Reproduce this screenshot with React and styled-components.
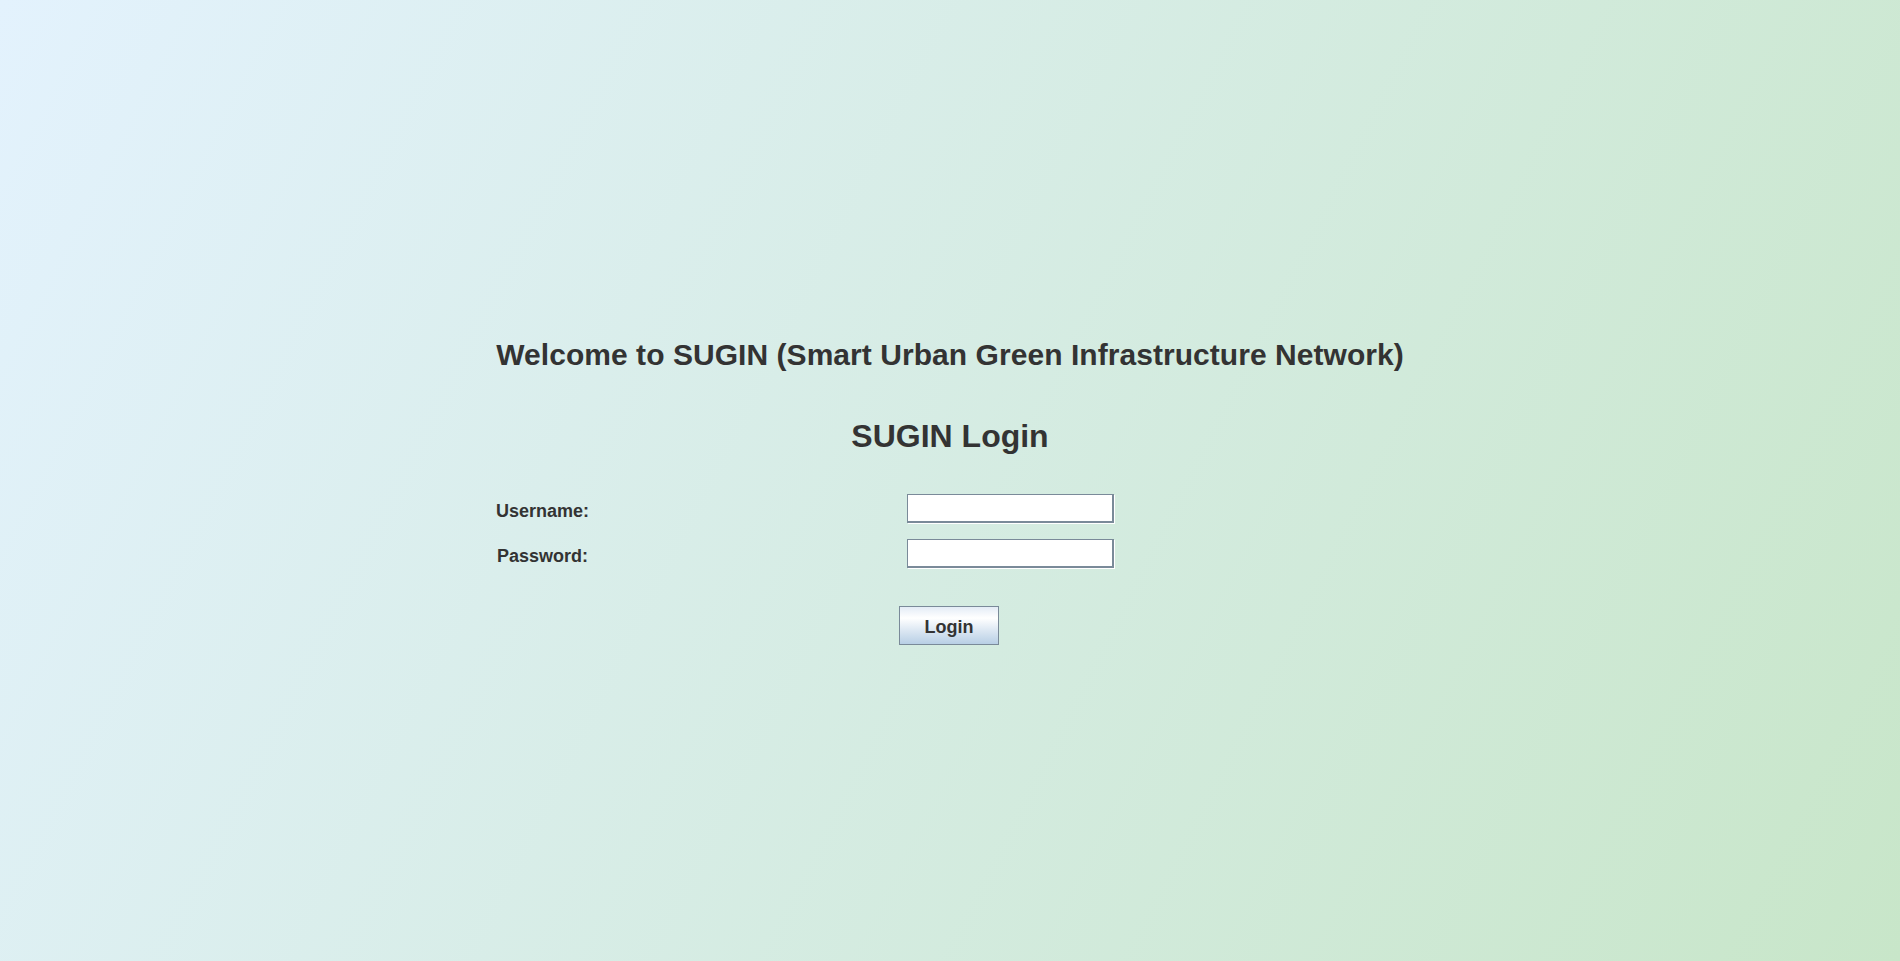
import styled, { createGlobalStyle } from 'styled-components';

const GlobalStyle = createGlobalStyle`
  html, body {
    margin: 0;
    padding: 0;
  }
  body {
    font-family: "Liberation Sans", Arial, sans-serif;
    color: #333333;
  }
`;

function App() {
  return (
    <Page>
      <GlobalStyle />
      <Panel>
        <Welcome>Welcome to SUGIN (Smart Urban Green Infrastructure Network)</Welcome>
        <LoginTitle>SUGIN Login</LoginTitle>
        <Form onSubmit={(e) => e.preventDefault()}>
          <Fields>
            <Label htmlFor="username">Username:</Label>
            <Field id="username" type="text" autoFocus />
            <Label htmlFor="password" $shift={1}>Password:</Label>
            <Field id="password" type="password" />
          </Fields>
          <ButtonRow>
            <Button type="submit">Login</Button>
          </ButtonRow>
        </Form>
      </Panel>
    </Page>
  );
}

const Page = styled.div`
  width: 100%;
  min-height: 100vh;
  background: linear-gradient(116.8deg, #e3f2fd 0%, #c8e6c9 100%);
  display: flex;
  justify-content: center;
  align-items: flex-start;
  padding-top: 338px;
  box-sizing: border-box;
`;

const Panel = styled.div`
  width: 908px;
  display: flex;
  flex-direction: column;
`;

const Welcome = styled.h1`
  margin: 0;
  font-size: 30px;
  line-height: 34px;
  font-weight: bold;
  text-align: center;
  white-space: nowrap;
  letter-spacing: 0.05px;
`;

const LoginTitle = styled.h2`
  margin: 46px 0 0;
  font-size: 32px;
  line-height: 37px;
  font-weight: bold;
  text-align: center;
`;

const Form = styled.form`
  margin-top: 39px;
  display: flex;
  flex-direction: column;
`;

const Fields = styled.div`
  display: grid;
  grid-template-columns: 411px 208px;
  row-gap: 16px;
  align-items: center;
`;

const Label = styled.label`
  font-size: 18px;
  line-height: 21px;
  font-weight: bold;
  padding-top: 5px;
  padding-left: ${(p) => p.$shift || 0}px;
`;

const Field = styled.input`
  width: 207px;
  height: 29px;
  box-sizing: border-box;
  margin: 0;
  padding: 0 3px;
  background: #ffffff;
  border: 1px solid #7a8a99;
  border-right-width: 2px;
  border-bottom-width: 2px;
  box-shadow: 1px 1px 0 #ffffff;
  font-family: "Liberation Sans", Arial, sans-serif;
  font-size: 16px;
  color: #333333;
  caret-color: #222222;
  outline: none;
`;

const ButtonRow = styled.div`
  display: flex;
  justify-content: center;
  margin-top: 38px;
  padding-right: 2px;
`;

const Button = styled.button`
  width: 100px;
  height: 39px;
  box-sizing: border-box;
  border: 1px solid #7a8a99;
  background: linear-gradient(
    to bottom,
    #e4ecf6 0%,
    #ffffff 30%,
    #dde8f3 62%,
    #b8cfe5 100%
  );
  font-family: "Liberation Sans", Arial, sans-serif;
  font-size: 18px;
  font-weight: bold;
  color: #333333;
  padding: 3px 0 0;
  cursor: pointer;
`;

export default App;
